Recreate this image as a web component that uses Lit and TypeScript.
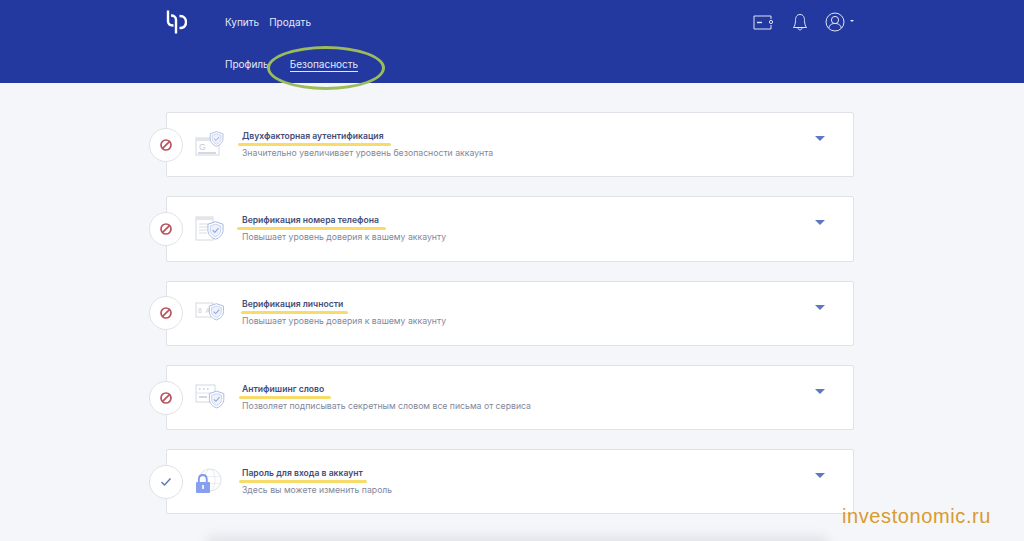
import { LitElement, css, html, svg } from 'lit';
import { customElement } from 'lit/decorators.js';

const shield = (x: number, y: number, s: number) => svg`
    <g transform="translate(${x} ${y}) scale(${s})">
        <path d="M10 0.8 L18.4 3.6 V10.2 C18.4 15 14.8 18.4 10 20.2 C5.2 18.4 1.6 15 1.6 10.2 V3.6 Z" fill="#fff" stroke="#a6b7df" stroke-width="1.1"/>
        <path d="M10 3.6 L15.8 5.5 V10.2 C15.8 13.6 13.4 16 10 17.4 C6.6 16 4.2 13.6 4.2 10.2 V5.5 Z" fill="#eef2fb" stroke="#bccae9" stroke-width="0.9"/>
        <path d="M6.8 10.2 L9.2 12.6 L13.4 7.8" fill="none" stroke="#8fa5d8" stroke-width="1.2"/>
    </g>`;

const icons = {
    google: svg`
        <rect x="1" y="6" width="23" height="17" fill="#fff" stroke="#d3d8e1" stroke-width="1"/>
        <rect x="1" y="6" width="23" height="3" fill="#e2e6ec"/>
        <text x="4" y="18" font-size="8.5" fill="#c3cad6" font-family="Liberation Sans, sans-serif">G</text>
        <rect x="3" y="20" width="18" height="2" fill="#d3d8e1"/>
        ${shield(14, -1, 0.76)}`,
    phone: svg`
        <rect x="1" y="1" width="17" height="23" fill="#fff" stroke="#d3d8e1" stroke-width="1"/>
        <rect x="1" y="1" width="17" height="3" fill="#e2e6ec"/>
        <path d="M4 8 H15 M4 11 H15 M4 14 H12 M4 17 H12" stroke="#d8dce4" stroke-width="1"/>
        ${shield(11.5, 5, 0.9)}`,
    person: svg`
        <rect x="1" y="3" width="17" height="14" fill="#fff" stroke="#d3d8e1" stroke-width="1"/>
        <text x="3" y="13" font-size="7" letter-spacing="1" fill="#c9cfda" font-family="Liberation Sans, sans-serif">8 A</text>
        ${shield(13, 3, 0.84)}`,
    word: svg`
        <rect x="1" y="0" width="19" height="17" fill="#fff" stroke="#d3d8e1" stroke-width="1"/>
        <path d="M1 8 H20" stroke="#dfe3ea" stroke-width="1"/>
        <path d="M4 4 H5.5 M8 4 H9.5 M12 4 H13.5 M4 12 H12" stroke="#c3cad6" stroke-width="1.6"/>
        ${shield(13, 5.5, 0.86)}`,
    lock: svg`
        <circle cx="15" cy="11" r="11" fill="#fff" stroke="#dce1ea" stroke-width="1"/>
        <ellipse cx="15" cy="11" rx="5" ry="11" fill="none" stroke="#e3e7ee" stroke-width="0.8"/>
        <path d="M4.5 7.5 H25.5 M4.5 14.5 H25.5" stroke="#e3e7ee" stroke-width="0.8"/>
        <path d="M3.8 14 V10.5 C3.8 4.5 11.8 4.5 11.8 10.5 V14" fill="none" stroke="#7f9aea" stroke-width="1.8"/>
        <rect x="1" y="13" width="14" height="11" rx="1" fill="#86a0ef"/>
        <rect x="7.2" y="16" width="1.6" height="4" fill="#fff"/>`,
};

const rows = [
    { icon: icons.google, done: false, title: 'Двухфакторная аутентификация', sub: 'Значительно увеличивает уровень безопасности аккаунта', lineLeft: -4, lineRight: -7 },
    { icon: icons.phone, done: false, title: 'Верификация номера телефона', sub: 'Повышает уровень доверия к вашему аккаунту', lineLeft: -5, lineRight: -7 },
    { icon: icons.person, done: false, title: 'Верификация личности', sub: 'Повышает уровень доверия к вашему аккаунту', lineLeft: -1, lineRight: -5 },
    { icon: icons.word, done: false, title: 'Антифишинг слово', sub: 'Позволяет подписывать секретным словом все письма от сервиса', lineLeft: -3, lineRight: -7 },
    { icon: icons.lock, done: true, title: 'Пароль для входа в аккаунт', sub: 'Здесь вы можете изменить пароль', lineLeft: -3, lineRight: -4 },
];

@customElement('app-root')
export class AppRoot extends LitElement {

    static styles = css`
        :host {
            display: block;
            position: relative;
            height: 541px;
            overflow: hidden;
            background: #f4f6fa;
            font-family: "Inter", "Noto Sans", sans-serif;
        }

        .header {
            height: 83px;
            box-sizing: border-box;
            background: #23399f;
            padding: 0 170px 0 165px;
            color: #e4e8f6;
            font-size: 10px;
        }

        .top {
            height: 44px;
            display: flex;
            align-items: center;
        }

        .logo {
            width: 22px;
            height: 24px;
            margin-right: 38px;
        }

        .links {
            display: flex;
            gap: 10px;
            flex: 1;
        }

        .tools {
            display: flex;
            align-items: center;
        }

        .wallet {
            margin-right: 19px;
        }

        .bell {
            margin-right: 17px;
        }

        .caret {
            width: 0;
            height: 0;
            margin-left: 5px;
            margin-bottom: 2px;
            border: 2px solid transparent;
            border-top: 2.5px solid #e4e8f6;
            border-bottom: 0;
        }

        .tabs {
            display: flex;
            gap: 21px;
            padding: 14px 0 0 60px;
        }

        .tab-active {
            padding-bottom: 1px;
            border-bottom: 1px solid #e4e8f6;
        }

        .ring {
            position: absolute;
            left: 267px;
            top: 46px;
            width: 118px;
            height: 44px;
            box-sizing: border-box;
            border: 3.5px solid #9cbc5b;
            border-radius: 50%;
        }

        .list {
            display: flex;
            flex-direction: column;
            gap: 19px;
            padding: 29px 170px 0 166px;
        }

        .card {
            height: 65.3px;
            box-sizing: border-box;
            display: flex;
            align-items: center;
            background: #fff;
            border: 1px solid #dfe2e8;
            border-radius: 2px;
            padding-right: 28px;
        }

        .status {
            width: 34px;
            height: 34px;
            box-sizing: border-box;
            margin-left: -18px;
            flex: none;
            display: flex;
            align-items: center;
            justify-content: center;
            background: #fff;
            border: 1px solid #dfe2e8;
            border-radius: 50%;
        }

        .pic {
            flex: none;
            margin-left: 12px;
            width: 31px;
            height: 26px;
            overflow: visible;
        }

        .texts {
            flex: 1;
            margin-left: 16px;
            padding-bottom: 8px;
        }

        .title {
            position: relative;
            display: inline-block;
            font-size: 8.6px;
            font-weight: 600;
            line-height: 12px;
            color: #434c78;
        }

        .title::after {
            content: '';
            position: absolute;
            left: var(--line-left);
            right: var(--line-right);
            bottom: -4px;
            height: 3px;
            border-radius: 2px;
            background: #f7dc6b;
        }

        .sub {
            margin-top: 4px;
            font-size: 8.7px;
            line-height: 12px;
            color: #83879a;
        }

        .arrow {
            flex: none;
            width: 0;
            height: 0;
            margin-bottom: 12px;
            border: 5px solid transparent;
            border-top: 5px solid #5b78c4;
            border-bottom: 0;
        }

        .shade {
            position: absolute;
            left: 205px;
            right: 195px;
            top: 535px;
            height: 20px;
            border-radius: 10px;
            background: #e3e5ea;
            filter: blur(5px);
        }

        .mark {
            position: absolute;
            left: 842px;
            top: 505px;
            font-family: "Liberation Sans", Arial, sans-serif;
            font-size: 20px;
            letter-spacing: 0.6px;
            color: #d99a2e;
        }
    `;

    renderRow(row: typeof rows[number]) {
        return html`
            <div class="card">
                <div class="status">
                    ${row.done
                        ? html`<svg width="12" height="10" viewBox="0 0 12 10"><path d="M1.5 5 L4.5 8 L10.5 1.5" fill="none" stroke="#5a73b4" stroke-width="1.4"/></svg>`
                        : html`<svg width="14" height="14" viewBox="0 0 14 14"><circle cx="7" cy="7" r="5" fill="none" stroke="#b9545f" stroke-width="1.7"/><path d="M3.6 10.4 L10.4 3.6" stroke="#b9545f" stroke-width="1.7"/></svg>`}
                </div>
                <svg class="pic" viewBox="0 0 31 26">${row.icon}</svg>
                <div class="texts">
                    <div class="title" style="--line-left:${row.lineLeft}px;--line-right:${row.lineRight}px">${row.title}</div>
                    <div class="sub">${row.sub}</div>
                </div>
                <div class="arrow"></div>
            </div>
        `;
    }

    render() {
        return html`
            <div class="header">
                <div class="top">
                    <svg class="logo" viewBox="0 0 22 24" fill="none" stroke="#fff" stroke-width="2.4">
                        <path d="M3 0.5 V11 C3 14 5 15.5 8 15.5 H8.5"/>
                        <path d="M6 5.5 C9 5.5 11 7 11 10 V23.5"/>
                        <path d="M14.5 6 H15 C19 6 21 9 21 12 C21 16 19 18 15 18 H14.5"/>
                    </svg>
                    <div class="links"><span>Купить</span><span>Продать</span></div>
                    <div class="tools">
                        <svg class="wallet" width="20" height="15" viewBox="0 0 20 15" fill="none" stroke="#dfe4f5" stroke-width="1">
                            <path d="M18 4 V1 H1 V14 H18 V10"/>
                            <circle cx="18" cy="7" r="1.6"/>
                            <path d="M4 7.5 H9" stroke-width="1.4"/>
                        </svg>
                        <svg class="bell" width="16" height="18" viewBox="0 0 16 18" fill="none" stroke="#dfe4f5" stroke-width="1">
                            <path d="M8 1.5 C4.5 1.5 3.5 4.5 3.5 7.5 C3.5 11 2.5 13 1.5 14.5 H14.5 C13.5 13 12.5 11 12.5 7.5 C12.5 4.5 11.5 1.5 8 1.5 Z"/>
                            <path d="M6 15 C6 17.5 10 17.5 10 15"/>
                        </svg>
                        <svg width="20" height="20" viewBox="0 0 20 20" fill="none" stroke="#dfe4f5" stroke-width="1">
                            <circle cx="10" cy="10" r="9"/>
                            <circle cx="10" cy="8" r="3.6"/>
                            <path d="M3.8 16 C4.5 12.5 7 11.5 10 11.5 C13 11.5 15.5 12.5 16.2 16"/>
                        </svg>
                        <span class="caret"></span>
                    </div>
                </div>
                <div class="tabs"><span>Профиль</span><span class="tab-active">Безопасность</span></div>
            </div>
            <div class="ring"></div>
            <div class="list">${rows.map((row) => this.renderRow(row))}</div>
            <div class="shade"></div>
            <div class="mark">investonomic.ru</div>
        `;
    }
}
